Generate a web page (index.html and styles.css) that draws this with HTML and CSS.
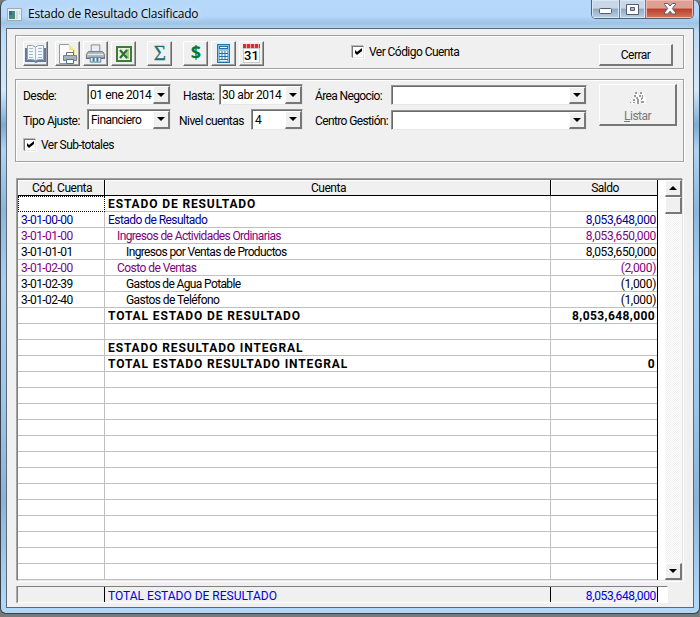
FILE: index.html
```
<!DOCTYPE html>
<html lang="es">
<head>
<meta charset="utf-8">
<title>Estado de Resultado Clasificado</title>
<link rel="stylesheet" href="styles.css">
</head>
<body>
<div class="window">
  <header class="titlebar">
    <svg class="appicon" width="15" height="13" viewBox="0 0 15 13"><path fill="#a4a9ac" d="M0 0h15v13H0z"/><path fill="#e9f0f3" d="M1 1h13v11H1z"/><path fill="#438c80" d="M2 3h6v8H2z"/><path fill="#346699" d="M2 3h3v4H2z"/><path fill="#c8dde0" d="M9 3h2v8H9zM12 3h1v4h-1z"/></svg>
    <h1>Estado de Resultado Clasificado</h1>
    <div class="controls">
      <span class="ctl min"><svg width="13" height="6" viewBox="0 0 13 6"><rect x=".5" y=".5" width="12" height="5" rx="1" fill="#fff" stroke="#545b70"/></svg></span>
      <span class="ctl max"><svg width="13" height="11" viewBox="0 0 13 11"><path fill="#fff" stroke="#545b70" d="M.5 .5h12v10H.5z"/><path fill="#a9bdd2" stroke="#545b70" d="M4.500 3.500h4v3h-4z"/></svg></span>
      <span class="ctl close"><svg width="14" height="12" viewBox="0 0 14 12"><path fill="#fff" stroke="#555c70" d="M1.500.5h3.300L7 3 9.200.5h3.300v1L9.300 5.500l3.200 4v1.500H9.200L7 8.200 4.800 11H1.500V9.500l3.200-4-3.200-4z"/></svg></span>
    </div>
  </header>
  <main class="client">
    <section class="group toolbar">
      <button class="tool"><svg width="21" height="20" viewBox="0 0 21 20"><path fill="#6379a0" d="M0 4h2v12h17V4h2v14h-8l-2 1-2-1H0z"/><path fill="#f2f8fb" stroke="#8fa6b8" d="M2.500 1.500h5l3 1.500 3-1.500h5v14h-5l-3 1-3-1h-5z"/><path fill="none" stroke="#a5bac6" d="M10.500 3v13M4 4.500h4M4 7.500h4M4 10.500h4M4 13.500h4M13 4.500h4M13 7.500h4M13 10.500h4M13 13.500h4"/></svg></button>
      <button class="tool"><svg width="21" height="21" viewBox="0 0 21 21"><path fill="#fafcfd" stroke="#8b9bad" d="M2.500 1.500h9l5 5v14h-14z"/><path fill="#f8e57c" d="M12 1l6 6v5h-1V7h-5z"/><path fill="#fff" stroke="#687381" d="M9.500 9.500h7v4h-7z"/><path fill="#a9b1b9" stroke="#7a818a" d="M6.500 12.500h13v5h-13z"/><path fill="#fff" stroke="#477898" d="M9.500 16.500h7v4h-7z"/></svg></button>
      <button class="tool"><svg width="21" height="21" viewBox="0 0 22 21"><path fill="#e6eef4" stroke="#7e8995" d="M6.500 8V1.500h9V8"/><path fill="#b4b8bd" stroke="#717780" d="M3.500 8.500h15l2 3v4h-19v-4z"/><path stroke="#eee" d="M3 11.500h16"/><path stroke="#59616b" d="M1 15.500h20"/><path fill="#deedf6" stroke="#527fa0" d="M5.500 14.500h11v5h-11z"/><path fill="#4a7592" d="M8 15h2v4H8zm4 0h2v4h-2z"/></svg></button>
      <button class="tool"><svg width="16" height="16" viewBox="0 0 16 16"><path fill="#3d7b38" d="M0 0h16v16H0z"/><path fill="#eaf3e1" d="M2 2h12v12H2z"/><path fill="#a9c797" d="M10 3h3v10h-3z"/><path fill="none" stroke="#2a7436" stroke-width="2.300" d="M4 4l7 8M11 4l-7 8"/></svg></button>
      <button class="tool sum">Σ</button>
      <button class="tool money">$</button>
      <button class="tool"><svg width="15" height="19" viewBox="0 0 15 19"><path fill="#2476a5" d="M1 0h13v19H1z"/><path fill="#85c6e0" d="M2 1h11v17H2z"/><path fill="#2b6d9d" d="M3 2h9v3H3zM3 7h9v10H3z"/><path stroke="#fff" stroke-width="2" stroke-dasharray="2 1" d="M3.500 8h8M3.500 11h8M3.500 14h8"/><path fill="#fff" d="M4 3h7v1H4zM3.500 16h8v1h-8z"/></svg></button>
      <button class="tool calendar"><b></b><span>31</span></button>
      <label class="check code"><span class="box"><svg width="9" height="8" viewBox="0 0 9 8"><path d="M1 2l2 2 5-4v3L3 7 1 5z"/></svg></span><span>Ver Código Cuenta</span></label>
      <button class="raised exit">Cerrar</button>
    </section>
    <section class="group filters">
      <div class="fields">
        <span class="label l1">Desde:</span><span class="combo date">01 ene 2014<i></i></span>
        <span class="label l2">Hasta:</span><span class="combo date">30 abr 2014<i></i></span>
        <span class="label l3">Área Negocio:</span><span class="combo wide"><i></i></span>
        <span class="label l1">Tipo Ajuste:</span><span class="combo type">Financiero<i></i></span>
        <span class="label l5">Nivel cuentas</span><span class="combo level">4<i></i></span>
        <span class="label l3">Centro Gestión:</span><span class="combo wide"><i></i></span>
      </div>
      <button class="raised list"><svg width="17" height="14" viewBox="0 0 17 14"><path fill="#fff" d="M7 2h2v2h2v3h2V2h2v4h2v7h-4V9h-2v4H7V9H5v4H3v-2h2V7h2z"/><path fill="#9b9b9b" d="M6 1h2v2H6zM5 4h2v2H5zM7 6h2v2H7zM4 8h2v2H4zM11 1h2v2h-2zM10 4h2v2h-2zM13 4h1v4h-1zM12 7h1v2h-1zM8 8h2v5H8zM12 10h3v2h-3zM1 11h1v1H1zM4 11h2v1H4z"/></svg><span><u>L</u>istar</span></button>
      <label class="check sub"><span class="box"><svg width="9" height="8" viewBox="0 0 9 8"><path d="M1 2l2 2 5-4v3L3 7 1 5z"/></svg></span><span>Ver Sub-totales</span></label>
    </section>
    <section class="report">
      <div class="grid">
        <div class="row head"><span>Cód. Cuenta</span><span>Cuenta</span><span>Saldo</span></div>
        <div class="row total"><span class="focus"></span><span>ESTADO DE RESULTADO</span><span></span></div>
        <div class="row blue"><span>3-01-00-00</span><span>Estado de Resultado</span><span>8,053,648,000</span></div>
        <div class="row purple"><span>3-01-01-00</span><span class="in1 tight">Ingresos de Actividades Ordinarias</span><span>8,053,650,000</span></div>
        <div class="row"><span>3-01-01-01</span><span class="in2 tight">Ingresos por Ventas de Productos</span><span>8,053,650,000</span></div>
        <div class="row purple"><span>3-01-02-00</span><span class="in1">Costo de Ventas</span><span>(2,000)</span></div>
        <div class="row"><span>3-01-02-39</span><span class="in2 tight">Gastos de Agua Potable</span><span>(1,000)</span></div>
        <div class="row"><span>3-01-02-40</span><span class="in2">Gastos de Teléfono</span><span>(1,000)</span></div>
        <div class="row total"><span></span><span>TOTAL ESTADO DE RESULTADO</span><span>8,053,648,000</span></div>
        <div class="row"><span></span><span></span><span></span></div>
        <div class="row total"><span></span><span>ESTADO RESULTADO INTEGRAL</span><span></span></div>
        <div class="row total"><span></span><span>TOTAL ESTADO RESULTADO INTEGRAL</span><span>0</span></div>
        <div class="row"><span></span><span></span><span></span></div>
        <div class="row"><span></span><span></span><span></span></div>
        <div class="row"><span></span><span></span><span></span></div>
        <div class="row"><span></span><span></span><span></span></div>
        <div class="row"><span></span><span></span><span></span></div>
        <div class="row"><span></span><span></span><span></span></div>
        <div class="row"><span></span><span></span><span></span></div>
        <div class="row"><span></span><span></span><span></span></div>
        <div class="row"><span></span><span></span><span></span></div>
        <div class="row"><span></span><span></span><span></span></div>
        <div class="row"><span></span><span></span><span></span></div>
        <div class="row"><span></span><span></span><span></span></div>
        <div class="row"><span></span><span></span><span></span></div>
      </div>
      <div class="scroll"><span class="arrow up"></span><span class="thumb"></span><span class="arrow down"></span></div>
    </section>
    <footer class="summary"><span></span><span>TOTAL ESTADO DE RESULTADO</span><span>8,053,648,000</span></footer>
  </main>
</div>
</body>
</html>
```
FILE: styles.css
```
* { box-sizing: border-box; }
body { margin: 0; width: 700px; height: 617px; overflow: hidden; background: #77797b; font: 12px/14px Roboto, "Liberation Sans", sans-serif; letter-spacing: -.55px; color: #000; }
button { font: inherit; letter-spacing: inherit; padding: 0; margin: 0; color: inherit; border-radius: 0; }
svg { display: block; flex: none; }
.window { width: 700px; height: 614px; padding: 0 6px 6px; border: 1px solid #39434d; border-top: 0; border-radius: 7px 7px 6px 6px; background: linear-gradient(180deg, #b7d9f8 0, #b4d7fb 16px, #9fc4e5 23px, #bddbf5 32px, #d4e9fa 90px, #7eaad4 125px, #b2d3ef 150px, #8bb6dc 210px, #a9ceef 280px, #9cc6ea 400px, #8cb3d6 500px, #b2d6f5 600px); }
.titlebar { height: 28px; display: flex; align-items: flex-start; }
.appicon { margin-top: 8px; }
.titlebar h1 { margin: 6px 0 0 6px; font: 12px/16px "Open Sans", sans-serif; letter-spacing: -.22px; white-space: nowrap; text-shadow: 0 0 6px #fff; }
.controls { display: flex; margin-left: auto; margin-right: -1px; width: 103px; height: 19px; border: 1px solid #4d6378; border-top: 0; border-radius: 0 0 5px 5px; overflow: hidden; }
.ctl { display: flex; justify-content: center; align-items: center; height: 18px; width: 28px; border-right: 1px solid #667d94; box-shadow: inset 0 0 0 1px #d6e8f8; background: linear-gradient(#c9d8e7 45%, #91a9c3 50%, #bad2e7); }
.min { padding-top: 4px; }
.ctl.max { width: 27px; }
.ctl.close { width: 47px; border: 0; background: linear-gradient(#dda095 45%, #b93e2b 50%, #d47a5d); box-shadow: inset 0 0 0 1px #efb7ad; }
.client { width: 688px; height: 580px; margin-left: -1px; border: 1px solid #5b6977; background: #f0f0f0; padding: 6px 8px 0; }
.group { width: 669px; border: 1px solid #a0a0a0; box-shadow: 1px 1px 0 #fff, inset 1px 1px 0 #fff; }
.toolbar { height: 34px; display: flex; align-items: flex-start; padding: 5px 0 0 7px; }
.tool { width: 25px; height: 25px; margin-right: 3px; flex: none; display: flex; align-items: center; justify-content: center; overflow: hidden; background: #f0f0f0; border: 1px solid #fff; border-right-color: #696969; border-bottom-color: #696969; box-shadow: inset -1px -1px #a0a0a0; }
.tool:first-child { margin-right: 7px; }
.tool:nth-child(4), .sum { margin-right: 11px; }
.sum { font: 21px/21px "Liberation Serif", serif; color: #1d7373; -webkit-text-stroke: .3px #1d7373; }
.money { font: bold 18px/20px "Open Sans", sans-serif; color: #057832; padding-bottom: 3px; }
.calendar { flex-direction: column; font: 13px/13px Roboto, sans-serif; font-weight: 500; letter-spacing: 0; }
.calendar b { width: 17px; height: 4px; background: repeating-linear-gradient(90deg, #d52e30 0 3px, #f3aaaa 3px 4px); }
.calendar span { width: 17px; height: 15px; border: 1px solid #c9c9c9; background: #fff; text-align: center; }
.check { display: flex; align-items: center; height: 14px; white-space: nowrap; }
.box { width: 12px; height: 12px; margin-right: 5px; background: #fff; border: 1px solid #777; border-right-color: #e5e5e5; border-bottom-color: #e5e5e5; display: flex; align-items: center; justify-content: center; flex: none; box-shadow: 1px 1px #fff, -1px -1px #bbb; }
.code { margin: 4px 0 0 85px; }
.raised { background: #f0f0f0; border: 1px solid #fff; border-right: 2px solid #777; border-bottom: 2px solid #777; }
.exit { width: 74px; height: 22px; margin: 3px 10px 0 auto; line-height: 18px; }
.filters { height: 83px; margin-top: 10px; display: grid; grid-template: 49px 30px / 572px 79px; align-content: start; padding: 4px 0 0 7px; }
.fields { display: flex; flex-wrap: wrap; align-items: flex-start; width: 572px; height: 49px; }
.label { height: 24px; line-height: 25px; white-space: nowrap; }
.combo { display: flex; height: 21px; padding-left: 3px; line-height: 20px; background: #fff; border: 1px solid #929292; border-right-color: #e7e7e7; border-bottom-color: #e7e7e7; box-shadow: inset 1px 1px #696969; white-space: nowrap; }
.combo i { margin: 1px 0 0 auto; width: 17px; background: #f0f0f0; border: 1px solid #fff; border-right: 2px solid #777; border-bottom: 2px solid #777; display: flex; align-items: center; justify-content: center; }
.combo i::after { content: ""; border: 4px solid transparent; border-top-color: #000; border-bottom: 0; }
.l1 { width: 64px; }
.date { width: 84px; padding-left: 2px; letter-spacing: -.4px; }
.l2 { width: 48px; padding-left: 12px; }
.l3 { width: 88px; padding-left: 12px; letter-spacing: -.62px; }
.combo.wide { width: 196px; margin-top: 1px; height: 20px; }
.type { width: 84px; }
.l5 { width: 80px; padding-left: 8px; }
.level { width: 52px; }
.list { grid-column: 2; grid-row: 1; width: 78px; height: 42px; margin-left: 4px; display: flex; flex-direction: column; align-items: center; padding-top: 6px; color: #787878; }
.list span { margin-top: 4px; }
.sub { grid-row: 2; margin: 5px 0 0 1px; }
.report { display: flex; width: 666px; height: 402px; margin: 17px 0 0 2px; background: #fff; border: 1px solid #808080; border-right-color: #e4e4e4; border-bottom-color: #e4e4e4; box-shadow: -1px -1px #a0a0a0, 1px 1px #fff; }
.grid { width: 640px; border-right: 1px solid #000; overflow: hidden; }
.row { display: grid; grid-template-columns: 87px 446px 106px; height: 16px; }
.row span { border-right: 1px solid #c0c0c0; border-bottom: 1px solid #c0c0c0; white-space: nowrap; padding-left: 3px; line-height: 16px; overflow: hidden; }
.row span:nth-child(3) { text-align: right; padding-right: 1px; border-right: 0; letter-spacing: -.33px; }
.row.head span, .row.head span:nth-child(3) { background: #f0f0f0; border-color: #000; padding: 1px 0 0 2px; text-align: center; line-height: 15px; letter-spacing: -.5px; box-shadow: inset 1px 1px #fff; }
.row .focus { border: 1px dotted #000; }
.row .in1 { padding-left: 12px; }
.row .in2 { padding-left: 21px; }
.row .tight { letter-spacing: -.63px; }
.total { font-weight: 700; letter-spacing: .88px; }
.row.total span:nth-child(3) { padding-right: 2px; letter-spacing: .4px; }
.blue { color: #000098; }
.purple { color: #800080; }
.scroll { margin-left: 7px; width: 17px; display: flex; flex-direction: column; background: repeating-conic-gradient(#f0f0f0 0 25%, #fff 0 50%) 0 0 / 2px 2px; }
.arrow, .thumb { height: 17px; width: 17px; background: #f0f0f0; border: 1px solid #fff; border-right: 2px solid #777; border-bottom: 2px solid #777; display: flex; align-items: center; justify-content: center; }
.arrow::after { content: ""; border: 4px solid transparent; }
.up::after { border-bottom-color: #000; border-top: 0; }
.down { margin-top: auto; }
.down::after { border-top-color: #000; border-bottom: 0; }
.summary { display: grid; grid-template-columns: 87px 446px 107px; width: 651px; height: 17px; margin: 5px 0 0 2px; background: #fff; border: 1px solid #808080; border-right-color: #fff; border-bottom-color: #fff; box-shadow: -1px 0 #aaa; color: #0000e0; }
.summary span { background: #f0f0f0; border-right: 1px solid #000; padding-left: 3px; line-height: 18px; height: 15px; white-space: nowrap; letter-spacing: 0; }
.summary span:last-child { text-align: right; padding-right: 1px; letter-spacing: -.33px; }
```
